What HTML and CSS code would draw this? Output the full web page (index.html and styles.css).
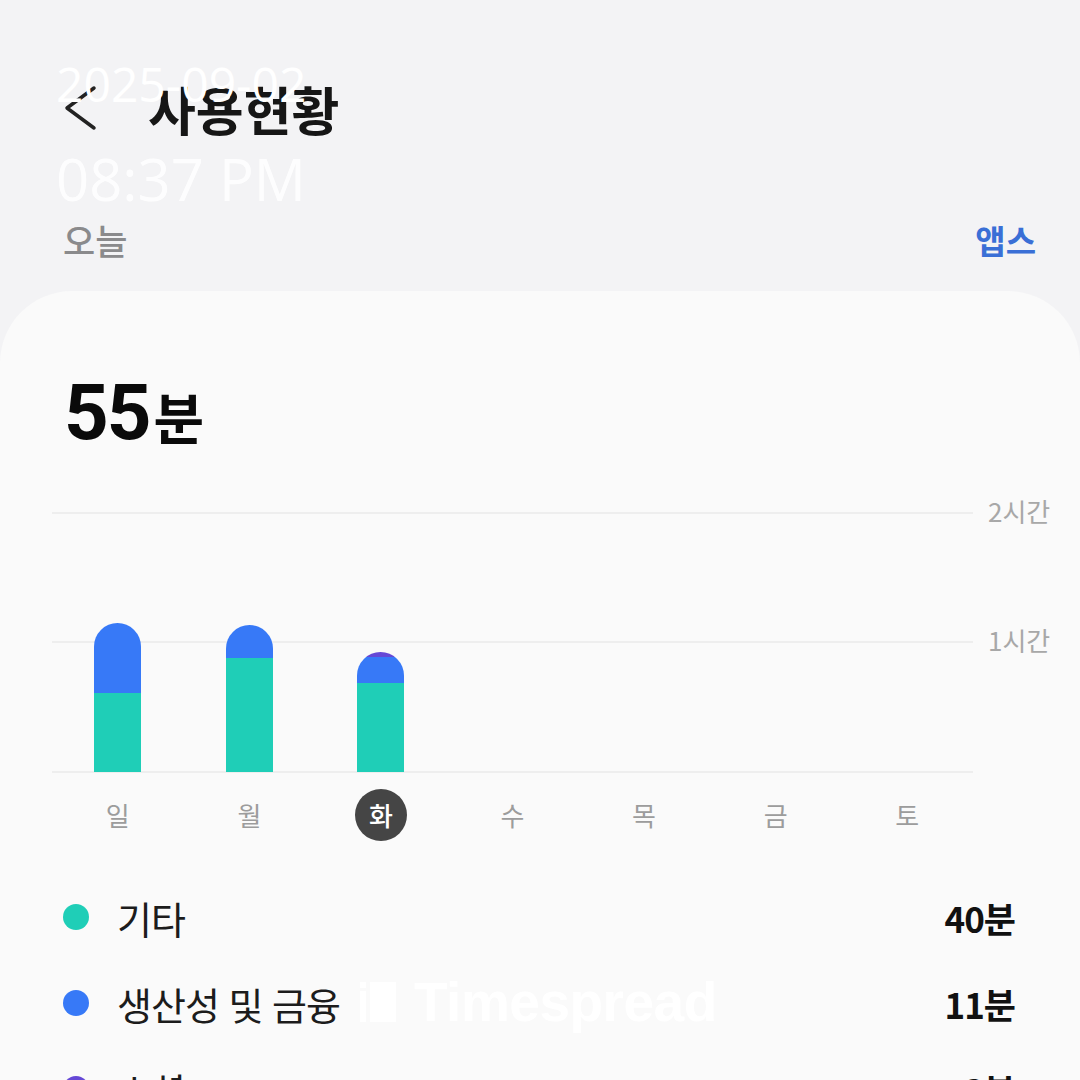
FILE: index.html
```html
<!DOCTYPE html>
<html lang="ko">
  <head>
    <meta charset="UTF-8" />
    <meta name="viewport" content="width=device-width, initial-scale=1.0" />
    <title>사용현황</title>
    <link rel="stylesheet" href="styles.css">
  </head>
  <body>
    <div class="screen">
      <div class="topbar">
        <svg class="back" width="40" height="48" viewBox="0 0 40 48">
          <path d="M30 4 L3 24 L30 44" fill="none" stroke="#222" stroke-width="3.5" stroke-linecap="round" stroke-linejoin="round" />
        </svg>
        <h1 class="title">사용현황</h1>
      </div>

      <div class="subhead">
        <span class="today">오늘</span>
        <span class="apps">앱스</span>
      </div>

      <div class="card">
        <div class="total"><span class="num">55</span><span class="unit">분</span></div>

        <div class="chart">
          <div class="grid-line top"></div>
          <div class="grid-line mid"></div>
          <div class="grid-line base"></div>
          <span class="axis-label top">2시간</span>
          <span class="axis-label mid">1시간</span>

          <div class="bars">
            <div class="col">
              <div class="bar">
                <div class="seg blue" style="height: 70px"></div>
                <div class="seg teal" style="height: 79px"></div>
              </div>
            </div>
            <div class="col">
              <div class="bar">
                <div class="seg blue" style="height: 33px"></div>
                <div class="seg teal" style="height: 114px"></div>
              </div>
            </div>
            <div class="col">
              <div class="bar">
                <div class="seg purple" style="height: 5px"></div>
                <div class="seg blue" style="height: 26px"></div>
                <div class="seg teal" style="height: 89px"></div>
              </div>
            </div>
            <div class="col"></div>
            <div class="col"></div>
            <div class="col"></div>
            <div class="col"></div>
          </div>
        </div>

        <div class="days">
          <span class="day">일</span>
          <span class="day">월</span>
          <span class="day"><span class="current">화</span></span>
          <span class="day">수</span>
          <span class="day">목</span>
          <span class="day">금</span>
          <span class="day">토</span>
        </div>

        <ul class="legend">
          <li class="row">
            <span class="dot teal"></span>
            <span class="name">기타</span>
            <span class="value">40분</span>
          </li>
          <li class="row">
            <span class="dot blue"></span>
            <span class="name">생산성 및 금융</span>
            <span class="value">11분</span>
          </li>
          <li class="row">
            <span class="dot purple"></span>
            <span class="name">소셜</span>
            <span class="value">3분</span>
          </li>
        </ul>
      </div>

      <!-- 촬영 시각 스탬프 -->
      <div class="stamp">
        <div class="date">2025-09-02</div>
        <div class="time">08:37 PM</div>
      </div>

      <!-- 워터마크 -->
      <div class="watermark">
        <svg width="36" height="40" viewBox="0 0 36 40">
          <rect x="0" y="0" width="6" height="6" fill="#fff" />
          <rect x="0" y="9" width="6" height="31" fill="#fff" />
          <rect x="10" y="0" width="26" height="40" fill="#fff" />
        </svg>
        <span class="brand">Timespread</span>
      </div>
    </div>
  </body>
</html>
```

FILE: styles.css
```css
* {
  margin: 0;
  padding: 0;
  box-sizing: border-box;
}

body {
  background-color: #f3f3f5;
  font-family: "Noto Sans CJK KR", "Noto Sans", sans-serif;
  color: #111;
  overflow: hidden;
}

.screen {
  position: relative;
  width: 1080px;
  height: 1080px;
  overflow: hidden;
}

/* 상단 바 */
.topbar {
  height: 216px;
  display: flex;
  align-items: center;
  padding-left: 64px;
  gap: 44px;
}

.title {
  font-size: 52px;
  font-weight: 700;
  color: #161616;
}

.subhead {
  height: 75px;
  display: flex;
  justify-content: space-between;
  padding: 0 44px 0 63px;
  line-height: 48px;
}

.today {
  font-size: 35px;
  color: #8a8a8c;
  font-weight: 500;
}

.apps {
  font-size: 33px;
  color: #3a6fd6;
  font-weight: 700;
}

/* 카드 */
.card {
  background-color: #fafafa;
  border-radius: 72px 72px 0 0;
  padding-top: 83px;
  height: 789px;
}

.total {
  padding-left: 64px;
  line-height: 78px;
  height: 78px;
  margin-bottom: 61px;
  font-family: Roboto, "Noto Sans CJK KR", sans-serif;
  font-weight: 700;
  color: #0a0a0a;
}

.total .num {
  font-size: 78px;
  letter-spacing: -2px;
}

.total .unit {
  font-family: "Noto Sans CJK KR", sans-serif;
  font-size: 55px;
  margin-left: 4px;
}

/* 차트 */
.chart {
  position: relative;
  margin-left: 52px;
  width: 921px;
  height: 259px;
}

.grid-line {
  position: absolute;
  left: 0;
  width: 921px;
  height: 2px;
  background-color: #eeeeee;
}

.grid-line.top { top: -1px; }
.grid-line.mid { top: 128px; }
.grid-line.base { top: 258px; }

.axis-label {
  position: absolute;
  left: 936px;
  font-size: 26px;
  color: #a8a8a8;
  line-height: 30px;
  white-space: nowrap;
}

.axis-label.top { top: -17px; }
.axis-label.mid { top: 112px; }

.bars {
  position: relative;
  display: grid;
  grid-template-columns: repeat(7, 1fr);
  height: 100%;
  align-items: end;
}

.col {
  display: flex;
  justify-content: center;
}

.bar {
  width: 47px;
  display: flex;
  flex-direction: column;
  border-radius: 24px 24px 0 0;
  overflow: hidden;
}

.teal { background-color: #1fceb7; }
.blue { background-color: #3779f7; }
.purple { background-color: #6548d6; }

/* 요일 */
.days {
  margin-left: 52px;
  width: 921px;
  margin-top: 17px;
  height: 52px;
  display: grid;
  grid-template-columns: repeat(7, 1fr);
  align-items: center;
  justify-items: center;
}

.day {
  font-size: 26px;
  color: #9c9c9c;
  line-height: 52px;
}

.current {
  display: flex;
  align-items: center;
  justify-content: center;
  width: 52px;
  height: 52px;
  border-radius: 50%;
  background-color: #454545;
  color: #fff;
  font-weight: 500;
}

/* 범례 */
.legend {
  list-style: none;
  margin-top: 33px;
}

.row {
  height: 86px;
  display: flex;
  align-items: center;
  padding: 0 65px 0 63px;
}

.dot {
  width: 26px;
  height: 26px;
  border-radius: 50%;
  margin-right: 28px;
}

.name {
  flex: 1;
  font-size: 38px;
  letter-spacing: -1px;
  color: #1c1c1c;
}

.value {
  font-size: 35px;
  font-weight: 700;
  letter-spacing: -1px;
  color: #111;
}

/* 오버레이 */
.stamp {
  position: absolute;
  top: 60px;
  left: 56px;
  font-family: "Open Sans", sans-serif;
  color: #fff;
}

.date {
  font-size: 48px;
  line-height: 47px;
}

.time {
  margin-top: 43px;
  font-size: 58px;
  line-height: 58px;
  opacity: 0.9;
}

.watermark {
  position: absolute;
  left: 360px;
  top: 982px;
  display: flex;
  align-items: center;
  gap: 18px;
}

.brand {
  font-family: "Liberation Sans", sans-serif;
  font-weight: 700;
  font-size: 55px;
  line-height: 40px;
  color: #fff;
  letter-spacing: -0.5px;
}
```
